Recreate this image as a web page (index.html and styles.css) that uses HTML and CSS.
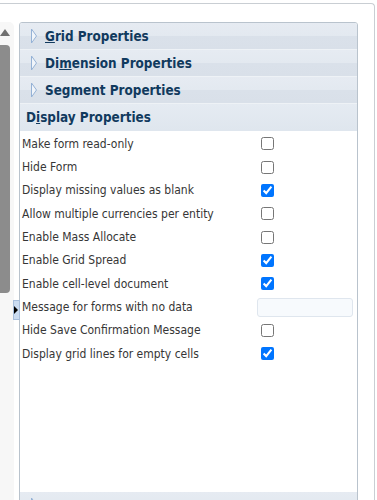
FILE: index.html
```html
<!DOCTYPE html>
<html lang="en">
<head>
    <meta charset="UTF-8">
    <meta name="viewport" content="width=device-width, initial-scale=1.0">
    <title>Form Properties</title>
    <link rel="stylesheet" href="styles.css">
</head>
<body>
    <div class="frame">
        <!-- left scroll gutter -->
        <div class="gutter">
            <div class="scroll-up"></div>
            <div class="scroll-thumb"></div>
        </div>

        <!-- splitter collapse handle -->
        <div class="splitter-handle"><span class="handle-arrow"></span></div>

        <div class="panel">
            <div class="acc-header">
                <svg class="acc-icon" width="8" height="16" viewBox="0 0 8 16"><polygon points="1.5,1 6.5,8 1.5,15" /></svg>
                <span><u>G</u>rid Properties</span>
            </div>
            <div class="acc-header">
                <svg class="acc-icon" width="8" height="16" viewBox="0 0 8 16"><polygon points="1.5,1 6.5,8 1.5,15" /></svg>
                <span>Di<u>m</u>ension Properties</span>
            </div>
            <div class="acc-header">
                <svg class="acc-icon" width="8" height="16" viewBox="0 0 8 16"><polygon points="1.5,1 6.5,8 1.5,15" /></svg>
                <span>Segment Properties</span>
            </div>
            <div class="acc-header open">
                <span>D<u>i</u>splay Properties</span>
            </div>

            <div class="acc-body">
                <div class="form-row"><label>Make form read-only</label><input type="checkbox"></div>
                <div class="form-row"><label>Hide Form</label><input type="checkbox"></div>
                <div class="form-row"><label>Display missing values as blank</label><input type="checkbox" checked></div>
                <div class="form-row"><label>Allow multiple currencies per entity</label><input type="checkbox"></div>
                <div class="form-row"><label>Enable Mass Allocate</label><input type="checkbox"></div>
                <div class="form-row"><label>Enable Grid Spread</label><input type="checkbox" checked></div>
                <div class="form-row"><label>Enable cell-level document</label><input type="checkbox" checked></div>
                <div class="form-row"><label>Message for forms with no data</label><input type="text" class="text-field"></div>
                <div class="form-row"><label>Hide Save Confirmation Message</label><input type="checkbox"></div>
                <div class="form-row"><label>Display grid lines for empty cells</label><input type="checkbox" checked></div>
            </div>

            <div class="acc-header">
                <svg class="acc-icon" width="8" height="16" viewBox="0 0 8 16"><polygon points="1.5,1 6.5,8 1.5,15" /></svg>
                <span></span>
            </div>
        </div>
    </div>
</body>
</html>
```

FILE: styles.css
```css
body { margin: 0; background: #fff; font-family: "DejaVu Sans Condensed", "DejaVu Sans", sans-serif; font-stretch: condensed; overflow: hidden; }
.frame { position: relative; margin-top: 3px; width: 375px; height: 497px; box-sizing: border-box; border-top: 1px solid #c9ced3; border-right: 1px solid #c9ced3; border-top-right-radius: 4px; display: flex; align-items: flex-start; overflow: hidden; }

.gutter { width: 14px; height: 480px; margin-top: 18px; background: #f7f7f7; border-top-right-radius: 5px; flex: none; }
.scroll-up { width: 0; height: 0; margin-top: 7px; border-left: 5px solid transparent; border-right: 5px solid transparent; border-bottom: 7px solid #707070; }
.scroll-thumb { width: 10px; height: 248px; margin-top: 9px; background: #8c8c8c; border-radius: 0 4px 4px 0; }

.splitter-handle { position: absolute; left: 13px; top: 296px; width: 5px; height: 18px; background: #cbdcf1; border: 1px solid #a7bedc; display: flex; align-items: center; }
.handle-arrow { width: 0; height: 0; border-top: 4px solid transparent; border-bottom: 4px solid transparent; border-left: 4px solid #000; }

.panel { width: 339px; margin-top: 18px; margin-left: 5px; box-sizing: border-box; border: 1px solid #b9c3cd; border-radius: 3px 3px 0 0; display: flex; flex-direction: column; flex: none; }
.acc-header { height: 26px; border-bottom: 1px solid #eef2f6; background: linear-gradient(#e6ebf2 0, #e3e9f0 50%, #dae1ea 50%, #d9e0e9 100%); display: flex; align-items: center; padding-left: 10px; font-size: 13.4px; font-weight: bold; color: #113a5e; }
.acc-header:first-child { border-radius: 2px 2px 0 0; }
.acc-header span { margin-left: 7px; }
.acc-header.open { padding-left: 6px; background: linear-gradient(#e5ebf2, #dfe6ee); border-bottom-color: #dfe6ee; }
.acc-header.open span { margin-left: 0; }
.acc-icon { flex: none; }
.acc-icon polygon { fill: #f1f5fa; stroke: #95b2d6; stroke-width: 1; }

.acc-body { height: 360px; padding-top: 1px; background: #fff; }
.form-row { height: 23.35px; display: grid; grid-template-columns: 235px 1fr; align-items: center; padding-left: 2px; font-size: 12px; color: #363636; }
.form-row input[type="checkbox"] { margin: 0 0 0 4px; width: 13px; height: 13px; }
.text-field { width: 96px; height: 19px; box-sizing: border-box; margin: 0; border: 1px solid #dfe6ee; border-radius: 3px; background: #f7fafd; }
```
